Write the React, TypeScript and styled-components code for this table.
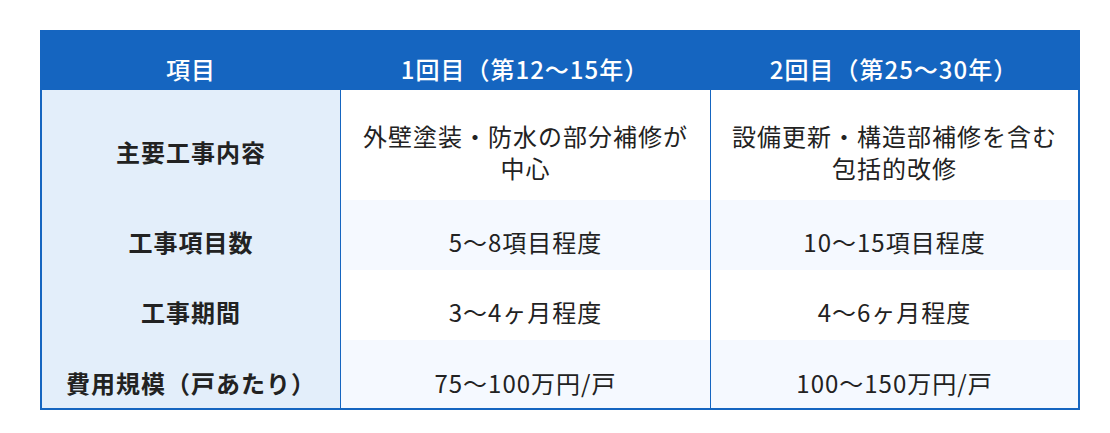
import React from "react";
import styled, { createGlobalStyle } from "styled-components";

const GlobalStyle = createGlobalStyle`
  html, body {
    margin: 0;
    padding: 0;
    background: #ffffff;
  }
  body {
    font-family: "Noto Sans CJK JP", "Noto Sans", sans-serif;
    color: #222222;
  }
`;

const Page = styled.div`
  padding: 30px 0 0 40px;
`;

const Table = styled.div`
  box-sizing: border-box;
  width: 1040px;
  display: grid;
  grid-template-columns: 298px 370px 368px;
  border: 2px solid #1565c0;
`;

const HeadCell = styled.div`
  display: flex;
  align-items: center;
  justify-content: center;
  text-align: center;
  background: #1565c0;
  color: #ffffff;
  font-size: 24px;
  letter-spacing: 1px;
  line-height: 32px;
  font-weight: 500;
  padding: 21px 16px 5px;
`;

const Cell = styled.div<{ $label?: boolean; $alt?: boolean; $tall?: boolean; $last?: boolean }>`
  box-sizing: border-box;
  display: flex;
  align-items: center;
  justify-content: center;
  text-align: center;
  font-size: 24px;
  letter-spacing: 1px;
  line-height: 32px;
  padding: ${(p) => (p.$last ? "27px 12px 9px" : "26px 12px 12px")};
  min-height: ${(p) => (p.$tall ? "110px" : "0")};
  font-weight: ${(p) => (p.$label ? 700 : 400)};
  color: #222222;
  background: ${(p) => (p.$label ? "#e3eefa" : p.$alt ? "#f5f9ff" : "#ffffff")};
  border-left: ${(p) => (p.$label ? "none" : "1px solid #1565c0")};
`;

const headers = ["項目", "1回目（第12〜15年）", "2回目（第25〜30年）"];

const rows: { label: string; first: React.ReactNode; second: React.ReactNode }[] = [
  {
    label: "主要工事内容",
    first: (
      <span>
        外壁塗装・防水の部分補修が
        <br />
        中心
      </span>
    ),
    second: (
      <span>
        設備更新・構造部補修を含む
        <br />
        包括的改修
      </span>
    ),
  },
  { label: "工事項目数", first: "5〜8項目程度", second: "10〜15項目程度" },
  { label: "工事期間", first: "3〜4ヶ月程度", second: "4〜6ヶ月程度" },
  { label: "費用規模（戸あたり）", first: "75〜100万円/戸", second: "100〜150万円/戸" },
];

export default function App() {
  return (
    <>
      <GlobalStyle />
      <Page>
        <Table>
          {headers.map((h) => (
            <HeadCell key={h}>{h}</HeadCell>
          ))}
          {rows.map((r, i) => {
            const alt = i % 2 === 1;
            const tall = i === 0;
            const last = i === rows.length - 1;
            return (
              <React.Fragment key={r.label}>
                <Cell $label $tall={tall} $last={last}>
                  {r.label}
                </Cell>
                <Cell $alt={alt} $tall={tall} $last={last}>
                  {r.first}
                </Cell>
                <Cell $alt={alt} $tall={tall} $last={last}>
                  {r.second}
                </Cell>
              </React.Fragment>
            );
          })}
        </Table>
      </Page>
    </>
  );
}
